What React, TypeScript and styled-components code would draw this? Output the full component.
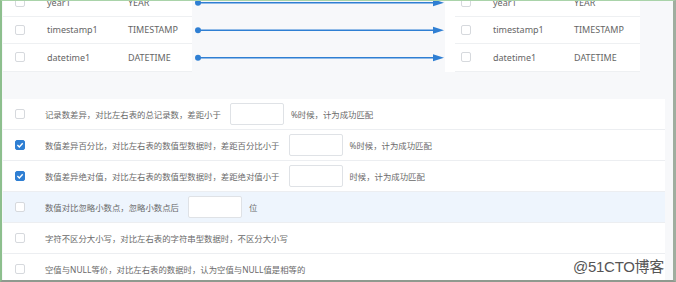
import styled, { createGlobalStyle } from 'styled-components';

const GlobalStyle = createGlobalStyle`
  html, body {
    margin: 0;
    padding: 0;
    background: #f7f8fa;
  }
  body {
    font-family: 'Noto Sans', 'Noto Sans CJK SC', sans-serif;
    color: #666;
  }
`;

const Frame = styled.div`
  position: relative;
  width: 676px;
  height: 282px;
  box-sizing: border-box;
  border-left: 2px solid #8dbf8d;
  border-top: 1px solid #a9d3a9;
  border-right: 3px solid #9fae9f;
  border-bottom: 2px solid #8f9a8f;
  background: #f7f8fa;
  overflow: hidden;
`;

const Mapping = styled.div`
  height: 98px;
  overflow: hidden;
  padding-left: 1px;
`;

const MappingInner = styled.div`
  display: grid;
  grid-template-columns: 189px 253px 195px;
  margin-top: -12px;
`;

const Table = styled.div<{ $right?: boolean }>`
  background: #fff;
  padding-left: ${(p) => (p.$right ? '10px' : '0')};
`;

const Row = styled.div<{ $right?: boolean }>`
  display: flex;
  align-items: center;
  height: 27.5px;
  box-sizing: border-box;
  border-bottom: 1px solid #eef0f2;
  font-size: 9px;
  padding-left: ${(p) => (p.$right ? '6px' : '12px')};
`;

const Box = styled.span<{ $checked?: boolean }>`
  display: inline-flex;
  align-items: center;
  justify-content: center;
  width: 10px;
  height: 10px;
  flex: none;
  box-sizing: border-box;
  border: 1px solid ${(p) => (p.$checked ? '#2f7fd3' : '#d6d9dd')};
  border-radius: 2px;
  background: ${(p) => (p.$checked ? '#2f7fd3' : '#fff')};
`;

const Name = styled.span`
  width: 81px;
  margin-left: 22px;
`;

const Connector = styled.svg`
  display: block;
  width: 253px;
  height: 82.5px;
`;

const Options = styled.div`
  margin-left: 1px;
  width: 662px;
`;

const Option = styled.div<{ $active?: boolean }>`
  display: flex;
  align-items: center;
  height: 31px;
  box-sizing: border-box;
  border-bottom: 1px solid #eceef1;
  padding-left: 12px;
  background: ${(p) => (p.$active ? '#eef5fd' : '#fff')};
  font-size: 8.4px;
  color: #6a6a6a;
  white-space: nowrap;
`;

const Label = styled.span`
  margin-left: 20px;
`;

const Field = styled.span<{ $w?: number }>`
  display: inline-block;
  width: ${(p) => p.$w ?? 54}px;
  height: 22px;
  box-sizing: border-box;
  border: 1px solid #dfe2e6;
  border-radius: 2px;
  background: #fff;
  margin: 0 7px 0 9px;
`;

const Watermark = styled.div`
  position: absolute;
  right: 9px;
  bottom: 4px;
  font-size: 15px;
  color: #555;
  letter-spacing: -0.3px;
  text-shadow: 0 0 2px #fff, 0 0 2px #fff;
  font-family: 'Liberation Sans', 'Noto Sans CJK SC', sans-serif;
`;

const Check = ({ checked }: { checked?: boolean }) => (
  <Box $checked={checked}>
    {checked && (
      <svg width="8" height="8" viewBox="0 0 8 8">
        <path d="M1.4 4.1 L3.3 5.9 L6.7 2.2" fill="none" stroke="#fff" strokeWidth="1.4" />
      </svg>
    )}
  </Box>
);

const columns = [
  { name: 'year1', type: 'YEAR' },
  { name: 'timestamp1', type: 'TIMESTAMP' },
  { name: 'datetime1', type: 'DATETIME' },
];

const App = () => {
  return (
    <>
      <GlobalStyle />
      <Frame>
        <Mapping>
          <MappingInner>
            <Table>
              {columns.map((c) => (
                <Row key={c.name}>
                  <Check />
                  <Name>{c.name}</Name>
                  <span>{c.type}</span>
                </Row>
              ))}
            </Table>
            <Connector viewBox="0 0 253 82.5">
              {columns.map((c, i) => {
                const y = 13.75 + i * 27.5;
                return (
                  <g key={c.name}>
                    <circle cx="6" cy={y} r="3" fill="#2f7fd3" />
                    <line x1="6" y1={y} x2="246" y2={y} stroke="#2f7fd3" strokeWidth="1.6" />
                    <path d={`M241 ${y - 3.5} L252 ${y} L241 ${y + 3.5} Z`} fill="#2f7fd3" />
                  </g>
                );
              })}
            </Connector>
            <Table $right>
              {columns.map((c) => (
                <Row key={c.name} $right>
                  <Check />
                  <Name>{c.name}</Name>
                  <span>{c.type}</span>
                </Row>
              ))}
            </Table>
          </MappingInner>
        </Mapping>
        <Options>
          <Option>
            <Check />
            <Label>记录数差异，对比左右表的总记录数，差距小于</Label>
            <Field />
            <span>%时候，计为成功匹配</span>
          </Option>
          <Option>
            <Check checked />
            <Label>数值差异百分比，对比左右表的数值型数据时，差距百分比小于</Label>
            <Field />
            <span>%时候，计为成功匹配</span>
          </Option>
          <Option>
            <Check checked />
            <Label>数值差异绝对值，对比左右表的数值型数据时，差距绝对值小于</Label>
            <Field />
            <span>时候，计为成功匹配</span>
          </Option>
          <Option $active>
            <Check />
            <Label>数值对比忽略小数点，忽略小数点后</Label>
            <Field />
            <span>位</span>
          </Option>
          <Option>
            <Check />
            <Label>字符不区分大小写，对比左右表的字符串型数据时，不区分大小写</Label>
          </Option>
          <Option>
            <Check />
            <Label>空值与NULL等价，对比左右表的数据时，认为空值与NULL值是相等的</Label>
          </Option>
        </Options>
        <Watermark>@51CTO博客</Watermark>
      </Frame>
    </>
  );
};

export default App;
